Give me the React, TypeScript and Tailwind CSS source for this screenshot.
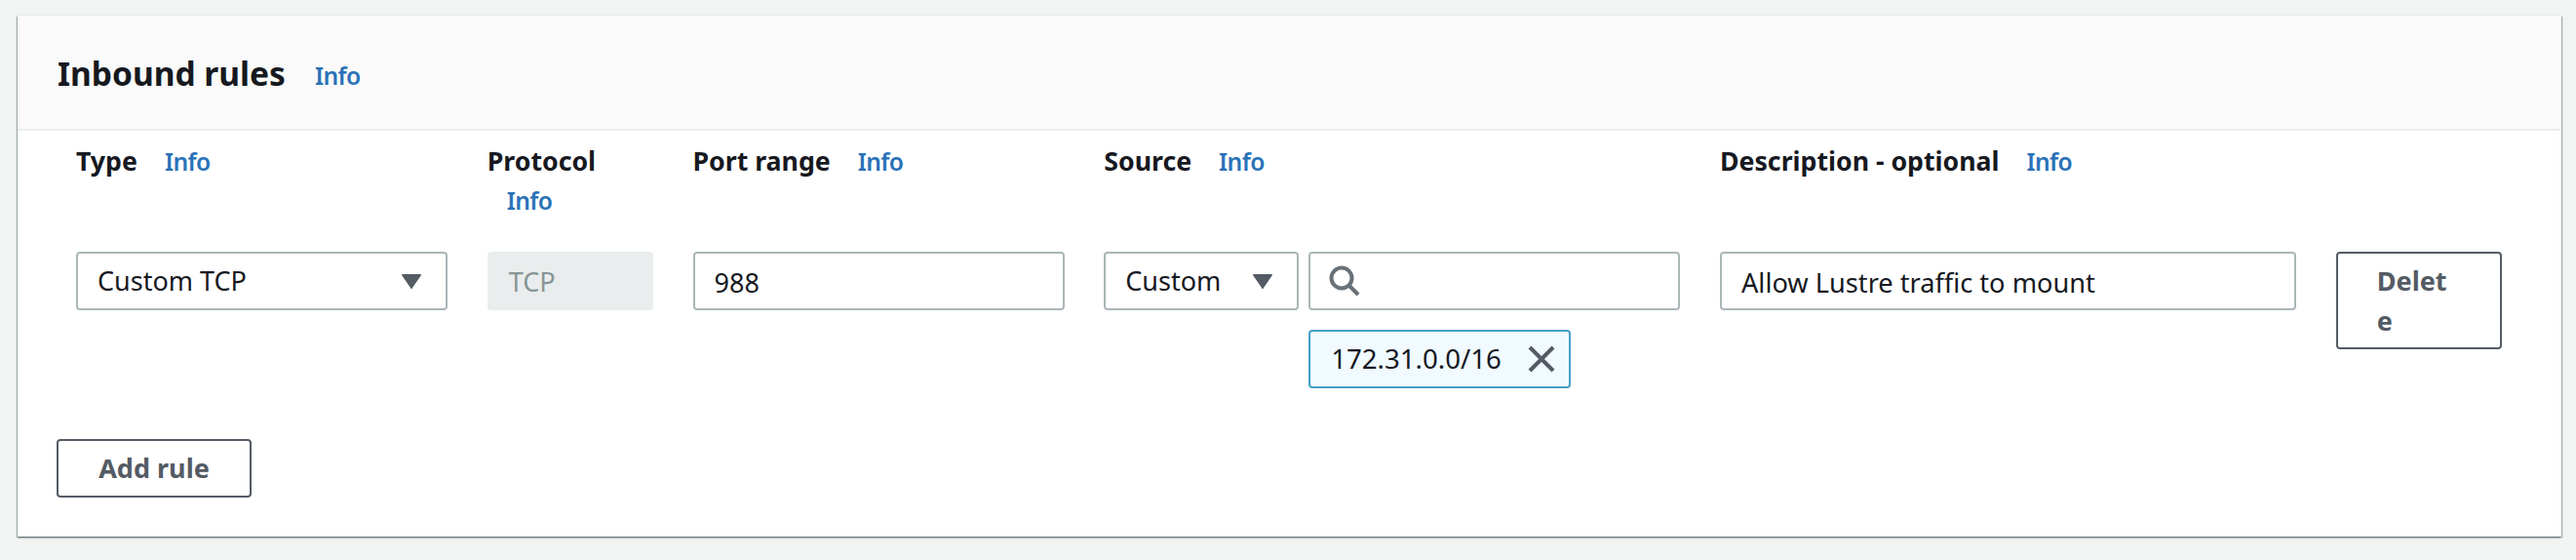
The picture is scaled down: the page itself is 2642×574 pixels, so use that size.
const font = { fontFamily: '"Noto Sans", sans-serif' };

function Info({ className = "" }: { className?: string }) {
  return <a className={`text-[24.6px] font-semibold tracking-[-0.6px] text-[#2a72b8] ${className}`}>Info</a>;
}

function Label({ text, infoClass = "ml-[28px]" }: { text: string; infoClass?: string }) {
  return (
    <div className="text-[26.7px] leading-[40px] font-bold text-[#16191f] pt-[11px]">
      <span>{text}</span>
      <Info className={`inline-block ${infoClass}`} />
    </div>
  );
}

function Caret() {
  return (
    <svg width="20" height="16" viewBox="0 0 20 16" className="shrink-0">
      <path d="M1 1h18a1 1 0 0 1 1 1l-9 13a1 1 0 0 1-2 0L0 2a1 1 0 0 1 1-1z" fill="#545b64" />
    </svg>
  );
}

function Select({ text, className = "" }: { text: string; className?: string }) {
  return (
    <div className={`h-[60px] flex items-center justify-between border-2 border-[#aab7b8] rounded-[4px] bg-white pl-[20px] pr-[25px] text-[27px] text-[#16191f] ${className}`}>
      <span>{text}</span>
      <Caret />
    </div>
  );
}

export default function App() {
  return (
    <div style={font} className="w-[2642px] h-[574px] bg-[#f2f3f3] pt-[16px] pl-[18px] overflow-hidden">
      <div className="w-[2609px] h-[534px] bg-white shadow-[0_1px_2px_0_rgba(0,28,36,0.5),1px_1px_1px_0_rgba(0,28,36,0.2),-1px_1px_1px_0_rgba(0,28,36,0.2)]">
        <div className="h-[118px] bg-[#fafafa] border-b-2 border-[#eaeded] pl-[41px] flex items-center gap-[30px]">
          <h2 className="text-[33.5px] font-bold text-[#16191f] pt-[2px]">Inbound rules</h2>
          <Info className="mt-[8px]" />
        </div>
        <div className="pl-[60px] grid grid-cols-[381px_170px_381px_591px_591px_170px] gap-x-[40.75px] grid-rows-[124px_auto]">
          <Label text="Type" />
          <Label text="Protocol" infoClass="ml-[20px]" />
          <Label text="Port range" />
          <Label text="Source" />
          <Label text="Description - optional" />
          <div />

          <Select text="Custom TCP" />
          <div className="h-[60px] flex items-center rounded-[4px] bg-[#eaeded] pl-[22px] pt-[2px] text-[27px] text-[#879596]">TCP</div>
          <input readOnly value="988" className="h-[60px] w-full border-2 border-[#aab7b8] rounded-[4px] bg-white pl-[20px] pt-[2px] text-[27px] text-[#16191f] outline-none" />
          <div>
            <div className="flex gap-[10px]">
              <Select text="Custom" className="w-[200px] shrink-0" />
              <div className="h-[60px] flex-1 flex items-center border-2 border-[#aab7b8] rounded-[4px] bg-white pl-[19px]">
                <svg width="32" height="32" viewBox="0 0 32 32" fill="none" stroke="#687078" strokeWidth="4">
                  <circle cx="13" cy="13" r="10.5" />
                  <path d="M20.5 20.5 30 30" />
                </svg>
              </div>
            </div>
            <div className="mt-[20px] ml-[210px] w-[269px] h-[60px] flex items-center justify-between border-2 border-[#44a0c9] rounded-[4px] bg-[#f1faff] pl-[21px] pr-[14px] text-[27.6px] text-[#16191f]">
              <span>172.31.0.0/16</span>
              <svg width="28" height="28" viewBox="0 0 28 28" stroke="#545b64" strokeWidth="4" fill="none">
                <path d="M2 2 26 26M26 2 2 26" />
              </svg>
            </div>
          </div>
          <input readOnly value="Allow Lustre traffic to mount" className="h-[60px] w-full border-2 border-[#aab7b8] rounded-[4px] bg-white pl-[20px] pt-[2px] text-[27.2px] text-[#16191f] outline-none" />
          <button className="h-[100px] w-[170px] border-2 border-[#545b64] rounded-[4px] bg-white px-[40px] text-left text-[27px] leading-[41px] font-bold text-[#545b64] break-all">Delete</button>
        </div>
        <div className="pl-[40px] mt-[52px]">
          <button className="w-[200px] h-[60px] border-2 border-[#545b64] rounded-[4px] bg-white text-[27px] font-bold text-[#545b64]">Add rule</button>
        </div>
      </div>
    </div>
  );
}
